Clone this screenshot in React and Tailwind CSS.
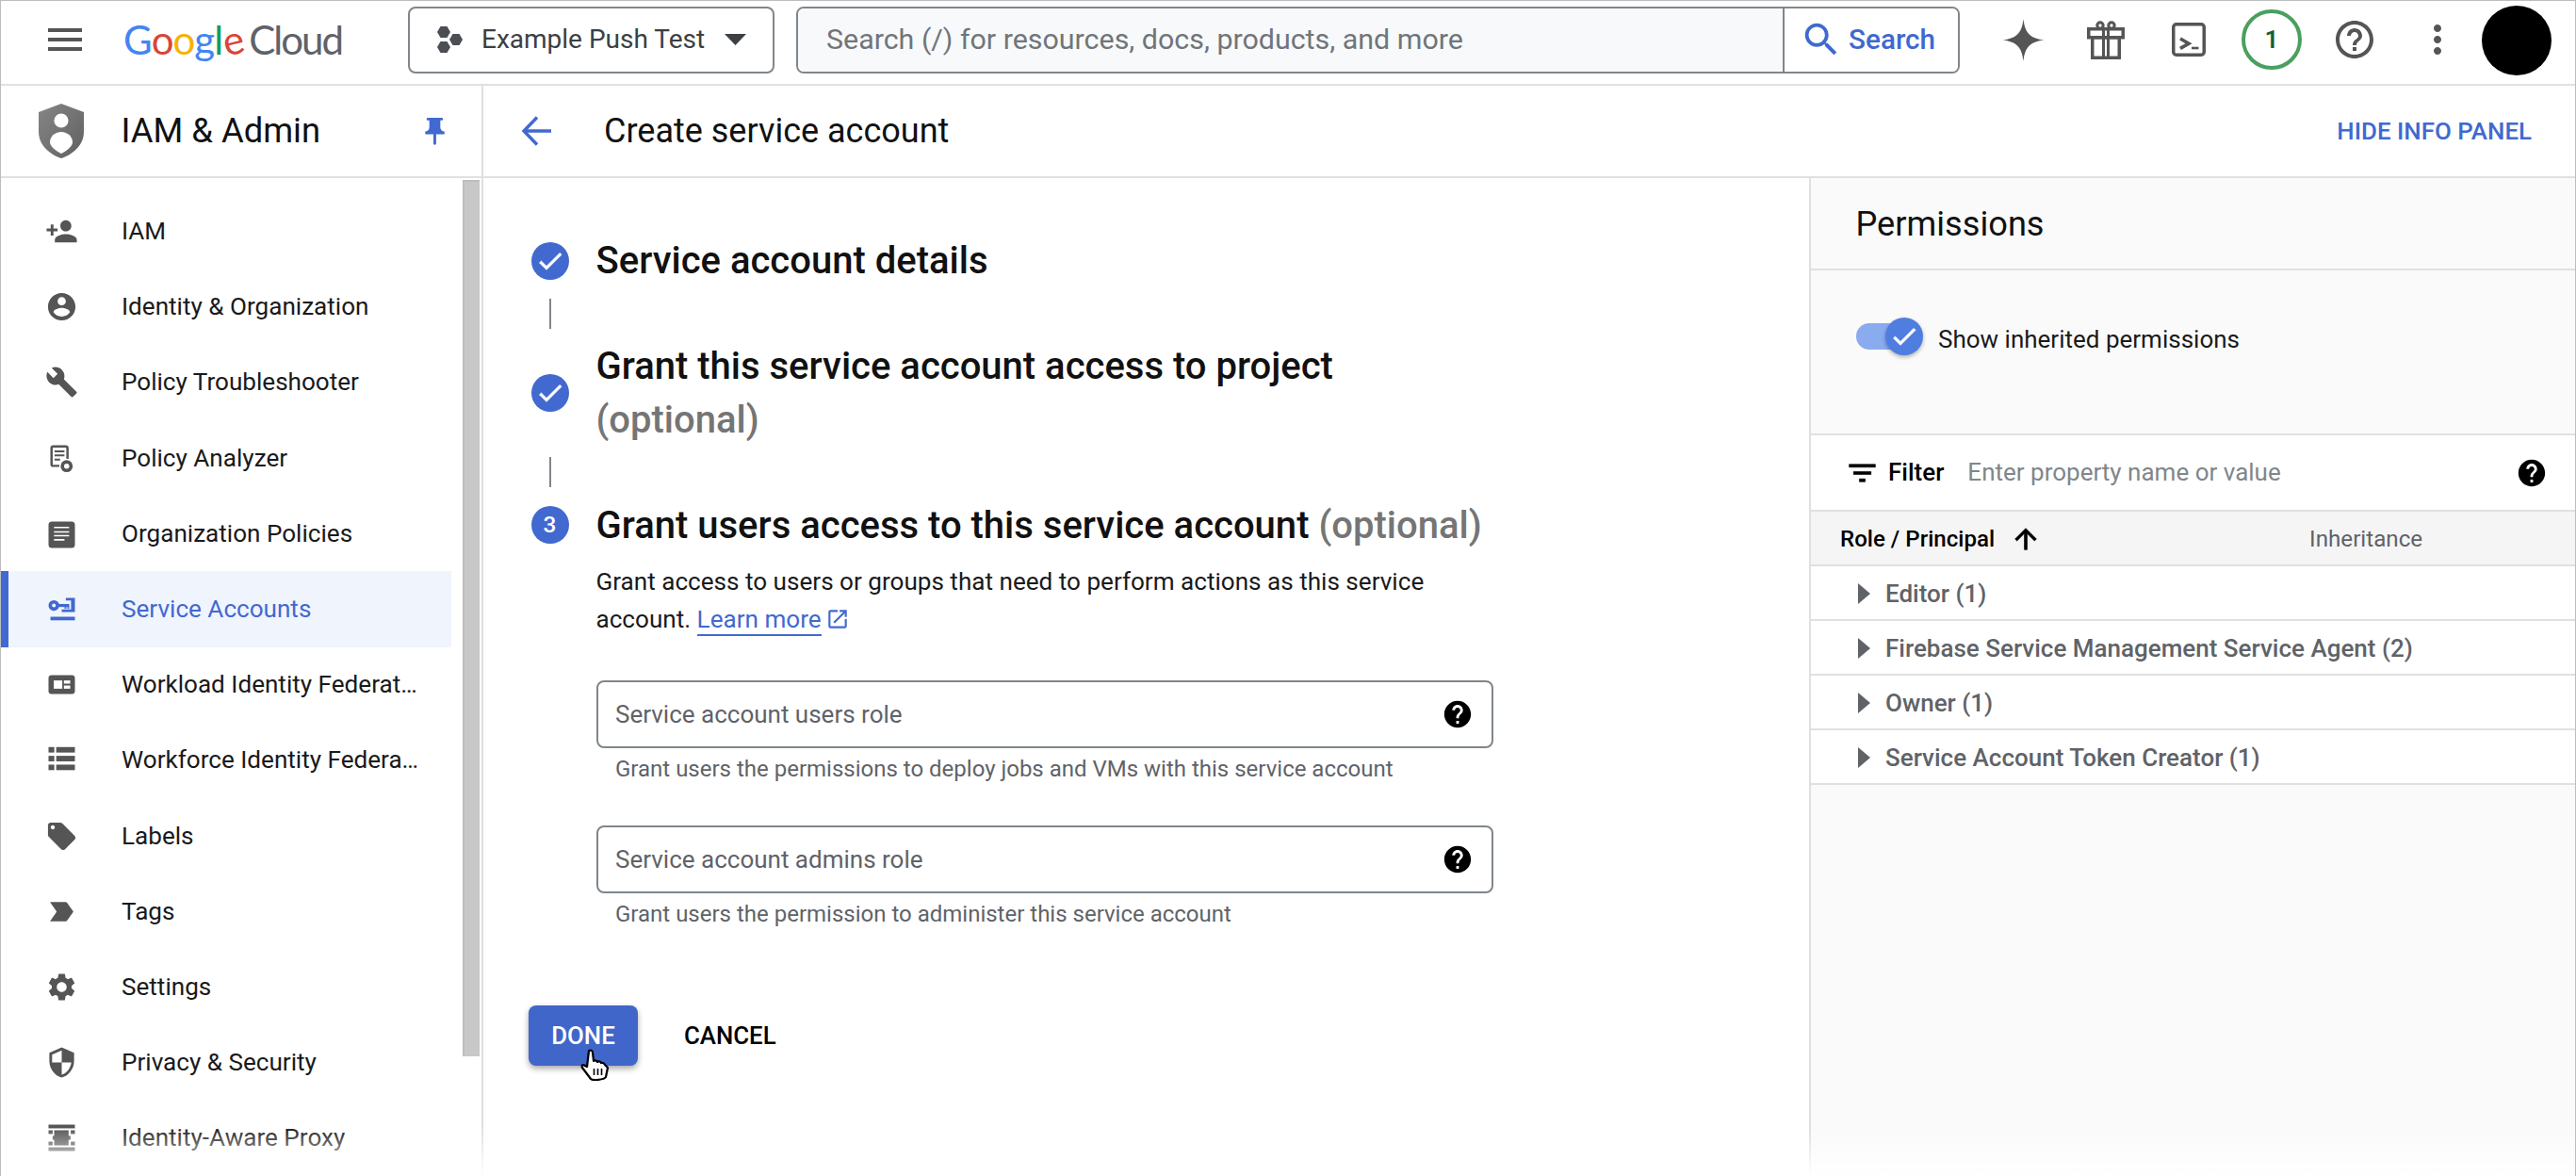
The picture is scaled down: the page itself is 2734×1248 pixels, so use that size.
const P = ({ d, className, fill = "currentColor", stroke = "none", sw = 0 }) => (
  <svg viewBox="0 0 24 24" className={className} fill={fill} stroke={stroke} strokeWidth={sw}><path d={d} /></svg>
);

const D = {
  menu: "M3 18h18v-2H3v2zm0-5h18v-2H3v2zm0-7v2h18V6H3z",
  personAdd: "M15 12c2.21 0 4-1.79 4-4s-1.79-4-4-4-4 1.79-4 4 1.79 4 4 4zm-9-2V7H4v3H1v2h3v3h2v-3h3v-2H6zm9 4c-2.67 0-8 1.34-8 4v2h16v-2c0-2.66-5.33-4-8-4z",
  account: "M12 2C6.48 2 2 6.48 2 12s4.48 10 10 10 10-4.48 10-10S17.52 2 12 2zm0 3c1.66 0 3 1.34 3 3s-1.34 3-3 3-3-1.34-3-3 1.34-3 3-3zm0 14.2c-2.5 0-4.71-1.28-6-3.22.03-1.99 4-3.08 6-3.08 1.99 0 5.97 1.09 6 3.08-1.29 1.94-3.5 3.22-6 3.22z",
  build: "M22.7 19l-9.1-9.1c.9-2.3.4-5-1.5-6.9-2-2-5-2.4-7.4-1.3L9 6 6 9 1.6 4.7C.4 7.1.9 10.1 2.9 12.1c1.9 1.9 4.6 2.4 6.9 1.5l9.1 9.1c.4.4 1 .4 1.4 0l2.3-2.3c.5-.4.5-1.1.1-1.4z",
  sell: "M21.41 11.58l-9-9C12.05 2.22 11.55 2 11 2H4c-1.1 0-2 .9-2 2v7c0 .55.22 1.05.59 1.42l9 9c.36.36.86.58 1.41.58.55 0 1.05-.22 1.41-.59l7-7c.37-.36.59-.86.59-1.41 0-.55-.23-1.06-.59-1.42zM5.5 7C4.67 7 4 6.33 4 5.5S4.67 4 5.5 4 7 4.67 7 5.5 6.33 7 5.5 7z",
  tag: "M3.5 18.99l11 .01c.67 0 1.27-.33 1.63-.84L20.5 12l-4.37-6.16c-.36-.51-.96-.84-1.63-.84l-11 .01L8.34 12 3.5 18.99z",
  settings: "M19.14 12.94c.04-.3.06-.61.06-.94 0-.32-.02-.64-.07-.94l2.03-1.58c.18-.14.23-.41.12-.61l-1.92-3.32c-.12-.22-.37-.29-.59-.22l-2.39.96c-.5-.38-1.03-.7-1.62-.94l-.36-2.54c-.04-.24-.24-.41-.48-.41h-3.84c-.24 0-.43.17-.47.41l-.36 2.54c-.59.24-1.13.57-1.62.94l-2.39-.96c-.22-.08-.47 0-.59.22L2.74 8.87c-.12.21-.08.47.12.61l2.03 1.58c-.05.3-.09.63-.09.94s.02.64.07.94l-2.03 1.58c-.18.14-.23.41-.12.61l1.92 3.32c.12.22.37.29.59.22l2.39-.96c.5.38 1.03.7 1.62.94l.36 2.54c.05.24.24.41.48.41h3.84c.24 0 .44-.17.47-.41l.36-2.54c.59-.24 1.13-.56 1.62-.94l2.39.96c.22.08.47 0 .59-.22l1.92-3.32c.12-.22.07-.47-.12-.61l-2.01-1.58zM12 15.6c-1.98 0-3.6-1.62-3.6-3.6s1.62-3.6 3.6-3.6 3.6 1.62 3.6 3.6-1.62 3.6-3.6 3.6z",
  security: "M12 1L3 5v6c0 5.55 3.84 10.74 9 12 5.16-1.26 9-6.45 9-12V5l-9-4zm0 10.99h7c-.53 4.12-3.28 7.79-7 8.94V12H5V6.3l7-3.11v8.8z",
  helpOutline: "M11 18h2v-2h-2v2zm1-16C6.48 2 2 6.48 2 12s4.48 10 10 10 10-4.48 10-10S17.52 2 12 2zm0 18c-4.41 0-8-3.59-8-8s3.59-8 8-8 8 3.59 8 8-3.59 8-8 8zm0-14c-2.21 0-4 1.79-4 4h2c0-1.1.9-2 2-2s2 .9 2 2c0 2-3 1.75-3 5h2c0-2.25 3-2.5 3-5 0-2.21-1.79-4-4-4z",
  help: "M12 2C6.48 2 2 6.48 2 12s4.48 10 10 10 10-4.48 10-10S17.52 2 12 2zm1 17h-2v-2h2v2zm2.07-7.75l-.9.92C13.45 12.9 13 13.5 13 15h-2v-.5c0-1.1.45-2.1 1.17-2.83l1.24-1.26c.37-.36.59-.86.59-1.41 0-1.1-.9-2-2-2s-2 .9-2 2H8c0-2.21 1.79-4 4-4s4 1.79 4 4c0 .88-.36 1.68-.93 2.25z",
  more: "M12 8c1.1 0 2-.9 2-2s-.9-2-2-2-2 .9-2 2 .9 2 2 2zm0 2c-1.1 0-2 .9-2 2s.9 2 2 2 2-.9 2-2-.9-2-2-2zm0 6c-1.1 0-2 .9-2 2s.9 2 2 2 2-.9 2-2-.9-2-2-2z",
  search: "M15.5 14h-.79l-.28-.27C15.41 12.59 16 11.11 16 9.5 16 5.91 13.09 3 9.5 3S3 5.91 3 9.5 5.91 16 9.5 16c1.61 0 3.09-.59 4.23-1.57l.27.28v.79l5 4.99L20.49 19l-4.99-5zm-6 0C7.01 14 5 11.99 5 9.5S7.01 5 9.5 5 14 7.01 14 9.5 11.99 14 9.5 14z",
  up: "M4 12l1.41 1.41L11 7.83V20h2V7.83l5.58 5.59L20 12l-8-8-8 8z",
  filter: "M10 18h4v-2h-4v2zM3 6v2h18V6H3zm3 7h12v-2H6v2z",
  pin: "M16 9V4h1c.55 0 1-.45 1-1s-.45-1-1-1H7c-.55 0-1 .45-1 1s.45 1 1 1h1v5c0 1.66-1.34 3-3 3v2h5.97v7l1 1 1-1v-7H19v-2c-1.66 0-3-1.34-3-3z",
  open: "M19 19H5V5h7V3H5c-1.11 0-2 .9-2 2v14c0 1.1.89 2 2 2h14c1.1 0 2-.9 2-2v-7h-2v7zM14 3v2h3.59l-9.83 9.83 1.41 1.41L19 6.41V10h2V3h-7z",
  check: "M9 16.17L4.83 12l-1.41 1.41L9 19 21 7l-1.41-1.41z",
};

const navIconClass = "w-[35px] h-[35px] shrink-0";

const AnalyzerIcon = () => (
  <svg viewBox="0 0 24 24" className={navIconClass}>
    <rect x="4.6" y="3.2" width="11.6" height="14.2" rx="1.2" fill="none" stroke="currentColor" strokeWidth="1.7" />
    <path d="M6.8 6.8h7.2M6.8 9.8h7.2M6.8 12.8h4" stroke="currentColor" strokeWidth="1.4" />
    <circle cx="15.6" cy="17.6" r="5.4" fill="#fff" />
    <circle cx="15.6" cy="17.6" r="4.4" fill="currentColor" />
    <circle cx="15.6" cy="17.6" r="1.9" fill="#fff" />
  </svg>
);
const OrgIcon = () => (
  <svg viewBox="0 0 24 24" className={navIconClass}>
    <rect x="2.4" y="3" width="19.2" height="19.2" rx="2.4" fill="currentColor" />
    <path d="M6.4 7.4h11M6.4 10.6h11M6.4 13.4h11M6.4 16.4h7.6" stroke="#fff" strokeWidth="1.1" />
  </svg>
);
const KeyIcon = () => (
  <svg viewBox="0 0 24 24" className={navIconClass} fill="currentColor">
    <path fillRule="evenodd" d="M6.3 5.4a3.9 3.9 0 1 0 0 7.8 3.9 3.9 0 0 0 0-7.8zm0 2.5a1.4 1.4 0 1 1 0 2.8 1.4 1.4 0 0 1 0-2.8z" />
    <rect x="9" y="8.2" width="8.5" height="2.2" />
    <rect x="14" y="10.4" width="1.4" height="1.2" />
    <rect x="16.1" y="10.4" width="1.4" height="1.2" />
    <path d="M15 3.8h6.6V14H12v-1.8h6.8V5.6H15z" />
    <rect x="3.8" y="17.5" width="17.8" height="2.6" />
  </svg>
);
const WorkloadIcon = () => (
  <svg viewBox="0 0 24 24" className={navIconClass}>
    <rect x="2.4" y="5.1" width="19.2" height="13.8" rx="2.2" fill="currentColor" />
    <rect x="6.2" y="9" width="6.2" height="6" fill="#fff" />
    <rect x="13.6" y="9" width="4.6" height="2.3" fill="#fff" />
    <rect x="13.6" y="12.7" width="4.6" height="2.3" fill="#fff" />
  </svg>
);
const ListIcon = () => (
  <svg viewBox="0 0 24 24" className={navIconClass} fill="currentColor">
    <rect x="2.4" y="2.6" width="4.2" height="4" />
    <rect x="8" y="2.6" width="13.6" height="4" />
    <rect x="2.4" y="9" width="4.2" height="4" />
    <rect x="8" y="9" width="13.6" height="4" />
    <rect x="2.4" y="15.4" width="4.2" height="4" />
    <rect x="8" y="15.4" width="13.6" height="4" />
  </svg>
);
const ProxyIcon = () => (
  <svg viewBox="0 0 24 24" className={navIconClass} fill="currentColor">
    <rect x="2.4" y="2.4" width="19.2" height="2.7" />
    <rect x="2.4" y="6.5" width="3" height="2.7" />
    <rect x="18.6" y="6.5" width="3" height="2.7" />
    <rect x="6.5" y="6.5" width="10.5" height="11" />
    <rect x="5.4" y="10.6" width="13" height="2.8" />
    <rect x="2.4" y="14.8" width="3" height="2.7" />
    <rect x="18.6" y="14.8" width="3" height="2.7" />
    <rect x="2.4" y="18.9" width="19.2" height="2.7" />
  </svg>
);

const nav = [
  { label: "IAM", icon: <P d={D.personAdd} className={navIconClass} /> },
  { label: "Identity & Organization", icon: <P d={D.account} className={navIconClass} /> },
  { label: "Policy Troubleshooter", icon: <P d={D.build} className={navIconClass} /> },
  { label: "Policy Analyzer", icon: <AnalyzerIcon /> },
  { label: "Organization Policies", icon: <OrgIcon /> },
  { label: "Service Accounts", icon: <KeyIcon />, active: true },
  { label: "Workload Identity Federation", icon: <WorkloadIcon /> },
  { label: "Workforce Identity Federation", icon: <ListIcon /> },
  { label: "Labels", icon: <P d={D.sell} className={navIconClass} /> },
  { label: "Tags", icon: <P d={D.tag} className={navIconClass} /> },
  { label: "Settings", icon: <P d={D.settings} className={navIconClass} /> },
  { label: "Privacy & Security", icon: <P d={D.security} className={navIconClass} /> },
  { label: "Identity-Aware Proxy", icon: <ProxyIcon /> },
];

const Header = () => (
  <header className="h-[90px] shrink-0 flex items-center pb-[6px] border-b-2 border-[#e0e0e0] bg-white">
    <P d={D.menu} className="ml-[44px] w-[48px] h-[48px] text-[#555555] shrink-0" />
    <div className="ml-[38px] w-[232px] shrink-0 flex items-baseline font-[Lato,sans-serif] text-[42px] leading-[50px] tracking-[-1px] whitespace-nowrap">
      <span className="text-[#4285f4]">G</span>
      <span className="text-[#db4437]">o</span>
      <span className="text-[#f4b400]">o</span>
      <span className="text-[#4285f4]">g</span>
      <span className="text-[#0f9d58]">l</span>
      <span className="inline-block -rotate-[14deg] text-[#db4437]">e</span>
      <span className="ml-[7px] text-[#5f6368] tracking-[-2px]">Cloud</span>
    </div>
    <div className="ml-[70px] w-[389px] h-[71px] shrink-0 flex items-center rounded-[8px] border-2 border-[#80868b] bg-white">
      <svg viewBox="0 0 27 28" className="ml-[29px] w-[27px] h-[28px] shrink-0" fill="#4b4f54">
        <polygon points="0,6 3.5,0 10.5,0 14,6 10.5,12 3.5,12" />
        <polygon points="13,14 16.5,8 23.5,8 27,14 23.5,20 16.5,20" />
        <polygon points="0,22 3.5,16 10.5,16 14,22 10.5,28 3.5,28" />
      </svg>
      <span className="ml-[20px] text-[28px] text-[#3c4043] whitespace-nowrap">Example Push Test</span>
      <svg viewBox="0 0 23 12" className="ml-[21px] w-[23px] h-[12px] shrink-0" fill="#3c4043"><polygon points="0,0 23,0 11.5,12" /></svg>
    </div>
    <div className="ml-[23px] w-[1235px] h-[71px] shrink-0 flex items-stretch rounded-[8px] border-2 border-[#80868b] overflow-hidden">
      <div className="flex-1 bg-[#f8f9fa] flex items-center pl-[30px] text-[30.4px] text-[#70757a] whitespace-nowrap">
        Search (/) for resources, docs, products, and more
      </div>
      <div className="w-[186px] border-l-2 border-[#80868b] bg-white flex items-center text-[#3f69cf]">
        <P d={D.search} className="ml-[16px] w-[46px] h-[46px] shrink-0" />
        <span className="ml-[6px] text-[29.7px] font-medium">Search</span>
      </div>
    </div>
    <svg viewBox="0 0 24 24" className="ml-[45px] w-[45px] h-[45px] shrink-0" fill="#555555">
      <path d="M12 0C12.8 7.5 15.5 11.2 24 12 15.5 12.8 12.8 16.5 12 24 11.2 16.5 8.5 12.8 0 12 8.5 11.2 11.2 7.5 12 0Z" />
    </svg>
    <svg viewBox="0 0 40 41" className="ml-[45px] w-[40px] h-[41px] shrink-0" fill="none" stroke="#555555" strokeWidth="3.5">
      <circle cx="14" cy="5" r="3.2" strokeWidth="3" />
      <circle cx="26" cy="5" r="3.2" strokeWidth="3" />
      <rect x="1.75" y="8.75" width="36.5" height="9" />
      <rect x="5.75" y="17.75" width="28.5" height="21.5" />
      <path d="M17.5 9v30M22.5 9v30" strokeWidth="3" />
    </svg>
    <svg viewBox="0 0 36 36" className="ml-[50px] w-[36px] h-[36px] shrink-0" fill="none" stroke="#555555" strokeWidth="3.5">
      <rect x="1.75" y="1.75" width="32.5" height="32.5" rx="3" />
      <path d="M9 17l9 5.2-9 5.2" strokeWidth="3.6" />
      <path d="M21 27h7.5" strokeWidth="2.6" />
    </svg>
    <div className="ml-[38px] w-[64px] h-[64px] shrink-0 rounded-full border-[4px] border-[#4a9f5f] flex items-center justify-center text-[26px] font-semibold text-[#17602f]">1</div>
    <P d={D.helpOutline} className="ml-[32px] w-[48px] h-[48px] shrink-0 text-[#555555]" />
    <P d={D.more} className="ml-[40px] w-[48px] h-[48px] shrink-0 text-[#555555]" />
    <div className="ml-[23px] w-[74px] h-[74px] shrink-0 rounded-full bg-black mt-[2px]" />
  </header>
);

const Sidebar = () => (
  <aside className="relative w-[512px] shrink-0 flex flex-col border-r-2 border-[#e0e0e0] bg-white">
    <div className="h-[98px] shrink-0 flex items-center border-b-2 border-[#e0e0e0]">
      <svg viewBox="0 0 48 58" className="ml-[40px] w-[48px] h-[58px] shrink-0">
        <defs>
          <linearGradient id="sg" x1="0" y1="0" x2="1" y2="1">
            <stop offset="0" stopColor="#868686" />
            <stop offset="1" stopColor="#606060" />
          </linearGradient>
        </defs>
        <path d="M24 0L48 9V30C48 44 36 54 24 58 12 54 0 44 0 30V9Z" fill="url(#sg)" />
        <circle cx="24" cy="18" r="7.6" fill="#fff" />
        <path d="M24 30C31 30 36 35 36 41 36 45 30 50 24 53 18 50 12 45 12 41 12 35 17 30 24 30Z" fill="#fff" />
      </svg>
      <span className="ml-[39.5px] text-[36.4px] text-[#111111] whitespace-nowrap">IAM &amp; Admin</span>
      <P d={D.pin} className="ml-auto mr-[32px] w-[35px] h-[35px] shrink-0 text-[#4169cf]" />
    </div>
    <div className="flex-1 flex min-h-0 overflow-hidden">
      <nav className="w-[478px] shrink-0 pt-[16.5px]">
        {nav.map((it) => (
          <div
            key={it.label}
            className={
              it.active
                ? "h-[80.2px] flex items-center gap-[46.5px] pl-[38.5px] border-l-[8px] border-[#4169cf] bg-[#f0f4fd] text-[#4169cf]"
                : "h-[80.2px] flex items-center gap-[46.5px] pl-[46.5px] text-[#555555]"
            }
          >
            {it.icon}
            <span className={it.active ? "w-[316px] truncate text-[26.1px] text-[#4169cf]" : "w-[316px] truncate text-[26.1px] text-[#1a1a1a]"}>
              {it.label}
            </span>
          </div>
        ))}
      </nav>
      <div className="ml-[12px] mt-[2px] w-[18px] h-[930px] bg-[#c8c8c8] border-l-2 border-t-2 border-[#bdbdbd]" />
    </div>
    <div className="absolute left-0 right-[-2px] bottom-0 h-[52px] bg-gradient-to-b from-transparent to-white" />
  </aside>
);

const Check = () => (
  <div className="w-[40px] h-[40px] rounded-full bg-[#4169cf] shrink-0 flex items-center justify-center">
    <P d={D.check} className="w-[32px] h-[32px] text-white" stroke="currentColor" sw={0.6} />
  </div>
);
const Connector = ({ extra }) => (
  <div className={extra ? "ml-[19.5px] mt-[11.5px] mb-[11.5px] w-[2px] h-[32px] bg-[#80868b]" : "ml-[19.5px] mt-[11.5px] mb-[11px] w-[2px] h-[32px] bg-[#80868b]"} />
);
const titleClass = "text-[40px] leading-[57px] font-medium text-[#111111]";
const Opt = () => <span className="text-[#757575]">(optional)</span>;

const RoleInput = ({ label, hint }) => (
  <div>
    <div className="w-[952px] h-[72px] rounded-[8px] border-2 border-[#80868b] flex items-center pl-[18.5px] pr-[19px]">
      <span className="text-[26px] text-[#5f6368]">{label}</span>
      <P d={D.help} className="ml-auto w-[34px] h-[34px] text-black" />
    </div>
    <div className="mt-[6px] pl-[20.5px] h-[32px] leading-[32px] text-[24px] text-[#5f6368]">{hint}</div>
  </div>
);

const Form = () => (
  <main className="flex-1 min-w-0 bg-white pl-[50.5px] pt-[59px]">
    <div className="flex items-center gap-[29px]">
      <Check />
      <div className={titleClass}>Service account details</div>
    </div>
    <Connector />
    <div className="flex items-center gap-[29px]">
      <Check />
      <div className={titleClass}>
        <div>Grant this service account access to project</div>
        <Opt />
      </div>
    </div>
    <Connector extra />
    <div className="flex items-center gap-[29px]">
      <div className="w-[40px] h-[40px] rounded-full bg-[#4169cf] shrink-0 flex items-center justify-center text-[24.4px] font-medium text-white">3</div>
      <div className={titleClass}>
        Grant users access to this service account <Opt />
      </div>
    </div>
    <div className="ml-[69px] mt-[11.5px]">
      <p className="w-[900px] text-[26.1px] leading-[40px] text-[#1a1a1a]">
        Grant access to users or groups that need to perform actions as this service account.{" "}
        <span className="text-[#4169cf] border-b-2 border-[#4169cf] pb-[1px]">Learn more</span>
        <P d={D.open} className="inline-block ml-[4px] w-[26px] h-[26px] text-[#4169cf] align-[-4px]" />
      </p>
      <div className="mt-[45px] flex flex-col gap-[44px]">
        <RoleInput label="Service account users role" hint="Grant users the permissions to deploy jobs and VMs with this service account" />
        <RoleInput label="Service account admins role" hint="Grant users the permission to administer this service account" />
      </div>
    </div>
    <div className="ml-[-2.5px] mt-[81px] flex items-center gap-[49px]">
      <div className="relative w-[116px] h-[64px] rounded-[8px] bg-[#4166c9] shadow-[0_3px_6px_rgba(0,0,0,0.35)] flex items-center justify-center text-[25.8px] font-medium text-white">
        DONE
        <svg viewBox="0 0 32 34" className="absolute left-[54px] top-[46px] w-[32px] h-[34px]" fill="#fff" stroke="#000" strokeWidth="2.2" strokeLinejoin="round">
          <path d="M10 2C12 1 14 2 14 4L15 13C16 12 18 12 19 14 20 13 22 13 23 15 24 14.5 26 15 27 17L30 20 28 30C26 33 14 34 12 32L3 20C2 18 3 16 6 18L8 19Z" />
          <path d="M15.5 21v7M19.5 21v7M23.5 21v7" strokeWidth="1.6" fill="none" />
        </svg>
      </div>
      <span className="text-[25.8px] font-medium text-black">CANCEL</span>
    </div>
  </main>
);

const rows = ["Editor (1)", "Firebase Service Management Service Agent (2)", "Owner (1)", "Service Account Token Creator (1)"];

const Panel = () => (
  <section className="relative w-[813px] shrink-0 flex flex-col border-l-2 border-[#e0e0e0] bg-[#fafafa]">
    <div className="h-[98px] shrink-0 flex items-center pl-[47.5px] pt-[3px] border-b-2 border-[#e0e0e0] text-[36.2px] text-[#111111]">Permissions</div>
    <div className="h-[175px] shrink-0 flex items-start pt-[50px] pl-[48px] gap-[16px] border-b-2 border-[#e0e0e0]">
      <div className="relative w-[71px] h-[40px] shrink-0 flex items-center">
        <div className="w-[56px] h-[28px] rounded-full bg-[#8aabf0]" />
        <div className="absolute right-0 top-0 w-[40px] h-[40px] rounded-full bg-[#4f7de0] shadow-[0_2px_4px_rgba(0,0,0,0.3)] flex items-center justify-center">
          <P d={D.check} className="w-[32px] h-[32px] text-white" stroke="currentColor" sw={0.6} />
        </div>
      </div>
      <span className="mt-[4.5px] text-[26px] leading-[36px] text-[#1a1a1a]">Show inherited permissions</span>
    </div>
    <div className="h-[81px] shrink-0 flex items-center bg-white border-b-2 border-[#e0e0e0] pl-[36px] pr-[29.5px]">
      <P d={D.filter} className="w-[37px] h-[40px] text-black shrink-0" stroke="currentColor" sw={0.4} />
      <span className="ml-[9px] text-[26px] font-medium text-black">Filter</span>
      <span className="ml-[25px] text-[26px] text-[#80868b]">Enter property name or value</span>
      <P d={D.help} className="ml-auto w-[34px] h-[34px] text-black" />
    </div>
    <div className="h-[58px] shrink-0 flex items-center bg-[#f5f5f5] border-b-2 border-[#e0e0e0] pl-[31px] pt-[2px]">
      <span className="text-[24.1px] font-medium text-black">Role / Principal</span>
      <P d={D.up} className="ml-[16px] w-[34px] h-[34px] text-black" stroke="currentColor" sw={0.5} />
      <span className="ml-[284px] text-[24.2px] text-[#5f6368]">Inheritance</span>
    </div>
    {rows.map((r) => (
      <div key={r} className="h-[58px] shrink-0 flex items-center bg-white border-b-2 border-[#e0e0e0] pl-[50px]">
        <svg viewBox="0 0 13 22" className="w-[13px] h-[22px] shrink-0 mt-[2px]" fill="#5f6368"><polygon points="0,0 13,11 0,22" /></svg>
        <span className="ml-[16px] pt-[3px] text-[26px] font-medium text-[#5f6368] whitespace-nowrap">{r}</span>
      </div>
    ))}
    <div className="absolute left-[-2px] right-0 bottom-0 h-[48px] bg-gradient-to-b from-transparent to-white" />
  </section>
);

export default function App() {
  return (
    <div className="w-[2734px] h-[1248px] overflow-hidden flex flex-col border-t border-x border-[#bdbdbd] bg-white font-[Roboto,sans-serif]">
      <Header />
      <div className="flex-1 flex min-h-0">
        <Sidebar />
        <div className="flex-1 min-w-0 flex flex-col">
          <div className="h-[98px] shrink-0 flex items-center border-b-2 border-[#e0e0e0] text-[#4169cf]">
            <svg viewBox="0 0 32 32" className="ml-[40px] w-[32px] h-[32px] shrink-0" fill="none" stroke="currentColor" strokeWidth="3.4">
              <path d="M32 16H3M17 1.5L3 16l14 14.5" />
            </svg>
            <span className="ml-[56px] text-[36px] text-[#111111] whitespace-nowrap">Create service account</span>
            <span className="ml-auto mr-[46px] text-[25.9px] font-medium">HIDE INFO PANEL</span>
          </div>
          <div className="flex-1 flex min-h-0">
            <Form />
            <Panel />
          </div>
        </div>
      </div>
    </div>
  );
}
